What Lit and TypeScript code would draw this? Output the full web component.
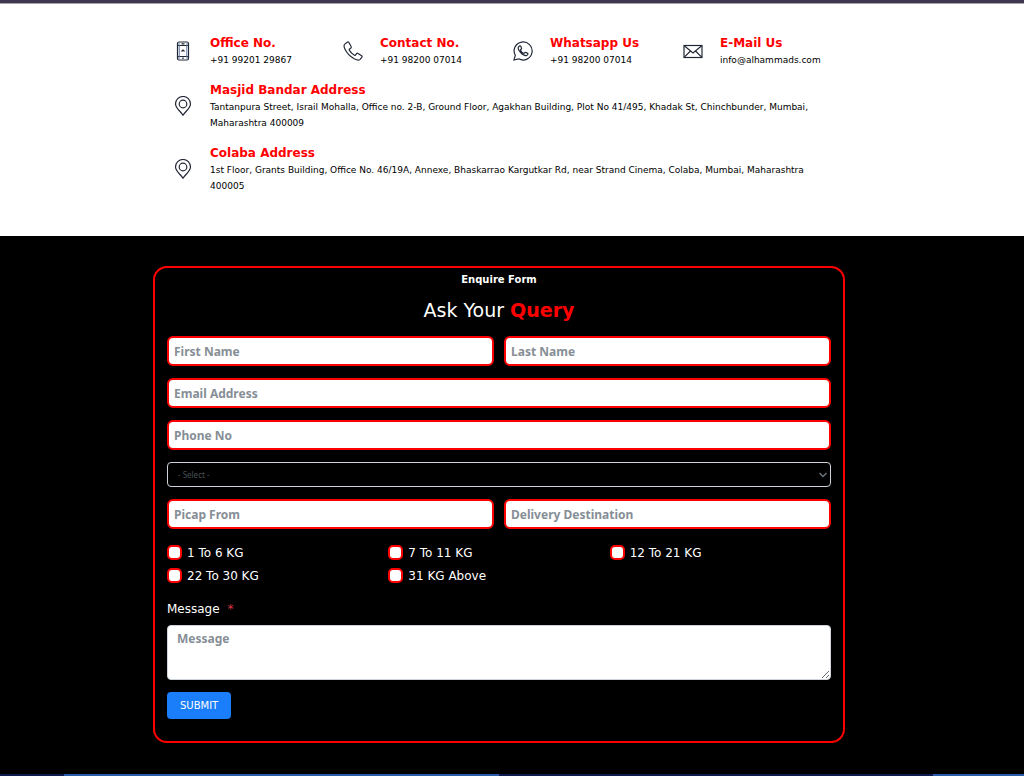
import { LitElement, html, css, svg } from "lit";
import { customElement } from "lit/decorators.js";

const icons = {
  mobile: svg`<rect x="4.5" y="1" width="11" height="18" rx="1.5"/><path d="M4.5 4.5h11M4.5 15.5h11M8.5 2.8h3M9.2 17.2h1.6" /><path d="M6.300 4.500v11M13.700 4.500v11M6 1.500v2.500M14 1.500v2.500M6 16v2.500M14 16v2.500" stroke="#7d92b5"/><path d="M8.500 10.500L10 9l1.500 1.500"/>`,
  phone: svg`<path d="M4.200 1.200L1.800 3.100C.8 4 .9 6 2 8.200c1.900 3.900 5.200 7.300 9.200 9.600 2.600 1.400 4.700 1.700 5.700.8l1.900-2.200c.5-.6.4-1.300-.2-1.700l-3.500-2.300c-.5-.4-1.100-.3-1.500.2l-1.100 1.400c-.4.4-.9.4-1.400.1-1.900-1.200-3.500-2.800-4.700-4.700-.3-.5-.2-1 .2-1.400l1.300-1c.5-.4.6-1 .2-1.500L5.900 1.500c-.4-.6-1.100-.7-1.700-.3z"/>`,
  whatsapp: svg`<path d="M1 19l1.300-4.600A9 9 0 1 1 5.700 17.800z"/><path d="M6.700 4.900L5.500 6c-.7 1 .1 3.100 1.800 5.100 1.900 2.200 4.400 3.800 6 3.500.9-.2 1.600-1.100 1.700-1.900 0-.3-2.400-1.500-2.700-1.400-.5.200-.9 1.200-1.300 1.200-1.200-.3-3.200-2.200-3.500-3.500 0-.5 1.100-.9 1.100-1.400 0-.4-.9-2.700-1.200-2.800z"/>`,
  mail: svg`<rect x="1" y="4.500" width="18" height="12"/><path d="M1.300 4.800L10 12l8.700-7.200M1.300 16.200l6.200-6.200M18.700 16.200l-6.200-6.200"/>`,
  pin: svg`<path d="M10 19.200C7.800 15.700 2.500 12 2.500 8a7.500 7.500 0 0 1 15 0c0 4-5.300 7.700-7.500 11.200z"/><circle cx="10" cy="8" r="3.800"/>`,
};

const contacts = [
  { icon: icons.mobile, title: "Office No.", text: "+91 99201 29867" },
  { icon: icons.phone, title: "Contact No.", text: "+91 98200 07014" },
  { icon: icons.whatsapp, title: "Whatsapp Us", text: "+91 98200 07014" },
  { icon: icons.mail, title: "E-Mail Us", text: "info@alhammads.com" },
  {
    icon: icons.pin,
    title: "Masjid Bandar Address",
    text: "Tantanpura Street, Israil Mohalla, Office no. 2-B, Ground Floor, Agakhan Building, Plot No 41/495, Khadak St, Chinchbunder, Mumbai, Maharashtra 400009",
    wide: true,
  },
  {
    icon: icons.pin,
    title: "Colaba Address",
    text: "1st Floor, Grants Building, Office No. 46/19A, Annexe, Bhaskarrao Kargutkar Rd, near Strand Cinema, Colaba, Mumbai, Maharashtra 400005",
    wide: true,
  },
];

const weights = ["1 To 6 KG", "7 To 11 KG", "12 To 21 KG", "22 To 30 KG", "31 KG Above"];

@customElement("contact-list")
export class ContactList extends LitElement {
  static styles = css`
    :host { display: block; }
    .list {
      display: grid;
      grid-template-columns: repeat(4, 1fr);
      row-gap: 13px;
      padding: 0 5px 0 7px;
    }
    .item { display: flex; align-items: center; gap: 17px; padding-left: 13px; }
    .wide { grid-column: 1 / -1; }
    .icon { flex: none; width: 20px; height: 20px; fill: none; stroke: #222836; stroke-width: 1.2; }
    .title { margin: 0; font-size: 12px; line-height: 18px; font-weight: bold; color: #f00; }
    .text { margin: 0; font-size: 9px; line-height: 16px; color: #000; }
  `;
  render() {
    return html`<div class="list">
      ${contacts.map(
        (c) => html`<div class="item ${c.wide ? "wide" : ""}">
          <svg class="icon" viewBox="0 0 20 20" aria-hidden="true">${c.icon}</svg>
          <div>
            <h3 class="title">${c.title}</h3>
            <p class="text">${c.text}</p>
          </div>
        </div>`
      )}
    </div>`;
  }
}

@customElement("enquire-form")
export class EnquireForm extends LitElement {
  static styles = css`
    :host { display: block; }
    * { box-sizing: border-box; }
    .card {
      display: flex;
      flex-direction: column;
      gap: 12px;
      padding: 5px 12px 22px;
      border: 2px solid #f00;
      border-radius: 14px;
      color: #fff;
    }
    .head { text-align: center; padding-bottom: 2px; }
    .eyebrow { margin: 0 0 11px; font-size: 10px; line-height: 14px; font-weight: bold; }
    .title { margin: 0; font-size: 19px; line-height: 24px; font-weight: normal; }
    .accent { color: #f00; font-weight: bold; }
    .pair { display: grid; grid-template-columns: 1fr 1fr; gap: 10px; }
    .field {
      width: 100%;
      height: 30px;
      padding: 0 5px;
      border: 2px solid #f00;
      border-radius: 6px;
      background: #fff;
      color: #212529;
      font: bold 12px "Noto Sans", sans-serif;
    }
    .field::placeholder, .area::placeholder { color: #868e96; opacity: 1; }
    .picker { display: grid; align-items: center; }
    .select {
      grid-area: 1 / 1;
      width: 100%;
      height: 25px;
      padding: 0 10px;
      appearance: none;
      border: 1px solid #ced4da;
      border-radius: 4px;
      background: #000;
      color: #495057;
      font: 8px "Noto Sans", sans-serif;
    }
    .arrow {
      grid-area: 1 / 1;
      justify-self: end;
      width: 8px;
      height: 8px;
      margin-right: 4px;
      fill: none;
      stroke: #6c757d;
      stroke-width: 1.5;
      pointer-events: none;
    }
    .weights { display: grid; grid-template-columns: repeat(3, 1fr); }
    .weight { display: flex; align-items: center; gap: 5px; height: 23px; font-size: 12px; }
    .box {
      flex: none;
      appearance: none;
      width: 15px;
      height: 15px;
      margin: 0;
      border: 2px solid #f00;
      border-radius: 5px;
      background: #fff;
    }
    .box:checked { background: #f00; }
    .message { display: flex; flex-direction: column; gap: 6px; }
    .label { font-size: 12px; line-height: 20px; }
    .star { margin-left: 4px; color: #dc3545; }
    .area {
      display: block;
      width: 100%;
      height: 55px;
      padding: 4px 9px;
      resize: vertical;
      border: 1px solid #ced4da;
      border-radius: 4px;
      background: #fff;
      color: #212529;
      font: bold 12px/18px "Noto Sans", sans-serif;
    }
    .submit {
      align-self: flex-start;
      height: 27px;
      padding: 0 13px;
      border: 0;
      border-radius: 4px;
      background: #1a7efb;
      color: #fff;
      font: 10px "DejaVu Sans", sans-serif;
    }
  `;
  private input(label: string, type = "text") {
    return html`<input class="field" type=${type} placeholder=${label} aria-label=${label} />`;
  }
  render() {
    return html`<form class="card" @submit=${(e: Event) => e.preventDefault()}>
      <div class="head">
        <p class="eyebrow">Enquire Form</p>
        <h2 class="title">Ask Your <span class="accent">Query</span></h2>
      </div>
      <div class="pair">${this.input("First Name")}${this.input("Last Name")}</div>
      ${this.input("Email Address", "email")} ${this.input("Phone No", "tel")}
      <div class="picker">
        <select class="select" aria-label="Select"><option>- Select -</option></select>
        <svg class="arrow" viewBox="0 0 8 8" aria-hidden="true"><path d="M.5 2L4 5.500 7.500 2" /></svg>
      </div>
      <div class="pair">${this.input("Picap From")}${this.input("Delivery Destination")}</div>
      <div class="weights">
        ${weights.map((w) => html`<label class="weight"><input class="box" type="checkbox" />${w}</label>`)}
      </div>
      <div class="message">
        <label class="label" for="message">Message <span class="star">*</span></label>
        <textarea class="area" id="message" placeholder="Message"></textarea>
      </div>
      <button class="submit" type="submit">SUBMIT</button>
    </form>`;
  }
}

@customElement("app-root")
export class AppRoot extends LitElement {
  static styles = css`
    :host { display: block; background: #000; font-family: "DejaVu Sans", sans-serif; }
    .top { height: 3px; background: #40364f; border-bottom: 1px solid #a5a3ab; }
    .contact { padding: 30px 26px 42px 0; background: #fff; }
    .enquire { padding: 30px 26px 31px 0; }
    .inner { display: block; max-width: 692px; margin: 0 auto; }
    .strip {
      height: 2px;
      background: linear-gradient(90deg, #0d1b50 0 64px, #2b5ca9 64px 499px, #0d1b50 499px 933px, #2b5ca9 933px);
    }
  `;
  render() {
    return html`<div class="top"></div>
      <section class="contact"><contact-list class="inner"></contact-list></section>
      <section class="enquire"><enquire-form class="inner"></enquire-form></section>
      <div class="strip"></div>`;
  }
}
